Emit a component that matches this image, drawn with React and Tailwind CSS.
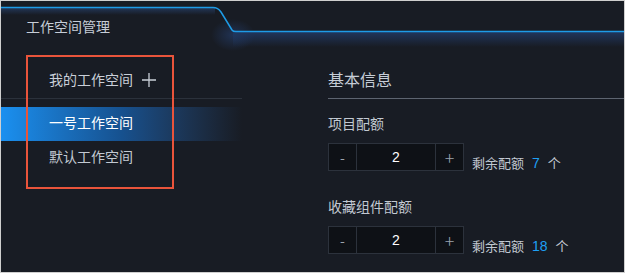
const QUOTAS = [
  { label: '项目配额', value: 2, left: 7 },
  { label: '收藏组件配额', value: 2, left: 18 },
];

function HeaderShape() {
  return (
    <svg className="absolute left-0 top-0" width="623" height="50" viewBox="0 0 623 50">
      <defs>
        <linearGradient id="tabFill" x1="0" y1="0" x2="0" y2="1">
          <stop offset="0" stopColor="#24395e" />
          <stop offset="1" stopColor="#24395e" stopOpacity="0" />
        </linearGradient>
        <linearGradient id="barFill" x1="0" y1="0" x2="0" y2="1">
          <stop offset="0" stopColor="#203760" />
          <stop offset="1" stopColor="#203760" stopOpacity="0" />
        </linearGradient>
        <radialGradient id="glow" cx="0.5" cy="0.5" r="0.5">
          <stop offset="0" stopColor="#22375e" stopOpacity="0.8" />
          <stop offset="1" stopColor="#22375e" stopOpacity="0" />
        </radialGradient>
      </defs>
      <rect x="0" y="6" width="214" height="8" fill="url(#tabFill)" />
      <ellipse cx="232" cy="34" rx="22" ry="16" fill="url(#glow)" />
      <rect x="232" y="30" width="391" height="16" fill="url(#barFill)" />
      <path
        d="M0 6.5 H212 Q217 6.5 220 11 L231 29 Q232 30.5 235 30.5 H623"
        fill="none"
        stroke="#1e9be6"
        strokeWidth="1.5"
      />
    </svg>
  );
}

function Stepper({ value }) {
  return (
    <div className="flex h-[28px] border border-[#2c323c] bg-[#0e1116]">
      <button className="w-[27px] flex items-center justify-center text-[#9aa3ad] text-[14px]">-</button>
      <div className="w-[80px] border-x border-[#2c323c] flex items-center justify-center text-white text-[14px] font-['Liberation_Sans',sans-serif]">
        {value}
      </div>
      <button className="w-[27px] flex items-center justify-center text-[#9aa3ad] text-[18px] font-light">+</button>
    </div>
  );
}

export default function App() {
  return (
    <div className="relative w-[625px] h-[273px] overflow-hidden border border-[#cfcfcf] bg-[#181c24] font-['Noto_Sans_CJK_SC','Noto_Sans',sans-serif]">
      <div className="relative h-[46px]">
        <HeaderShape />
        <div className="relative pl-[25px] pt-[15px] text-[14px] leading-[20px] text-[#c6cdd7]">工作空间管理</div>
      </div>

      <div className="flex">
        <div className="w-[241px]">
          <div className="mt-[15px] h-[37px] pb-[2px] border-b border-[#2b313b] flex items-center pl-[48px] text-[14px] text-[#c9cfd8]">
            我的工作空间
            <svg className="ml-[9px] mt-[1px]" width="14" height="14" viewBox="0 0 14 14">
              <path d="M7 0 V14 M0 7 H14" stroke="#c9cfd8" strokeWidth="1.3" />
            </svg>
          </div>
          <div className="mt-[8px] h-[34px] pb-[3px] flex items-center pl-[48px] text-[14px] text-white bg-gradient-to-r from-[#1a90f0] via-[#16518f] to-[#181c24]">
            一号工作空间
          </div>
          <div className="h-[34px] pb-[3px] flex items-center pl-[48px] text-[14px] text-[#c2c9d2]">默认工作空间</div>
        </div>

        <div className="flex-1 ml-[86px]">
          <div className="mt-[15px] h-[37px] pb-[2px] border-b border-[#5d6470] flex items-center text-[16px] text-[#c6cdd7]">
            基本信息
          </div>
          {QUOTAS.map((q, i) => (
            <div key={q.label} className={i === 0 ? 'mt-[14px]' : 'mt-[25px]'}>
              <div className="text-[14px] leading-[20px] text-[#c2c9d2]">{q.label}</div>
              <div className="mt-[10px] flex items-end">
                <Stepper value={q.value} />
                <div className="ml-[8px] relative top-[1px] text-[13px] leading-[18px] text-[#c2c9d2]">
                  剩余配额
                  <span className="mx-[8px] text-[#1ea0f5] font-['Liberation_Sans',sans-serif] text-[14px]">{q.left}</span>
                  个
                </div>
              </div>
            </div>
          ))}
        </div>
      </div>

      <div className="absolute left-[25px] top-[54px] w-[148px] h-[134px] border-2 border-[#e9543b] pointer-events-none" />
    </div>
  );
}
